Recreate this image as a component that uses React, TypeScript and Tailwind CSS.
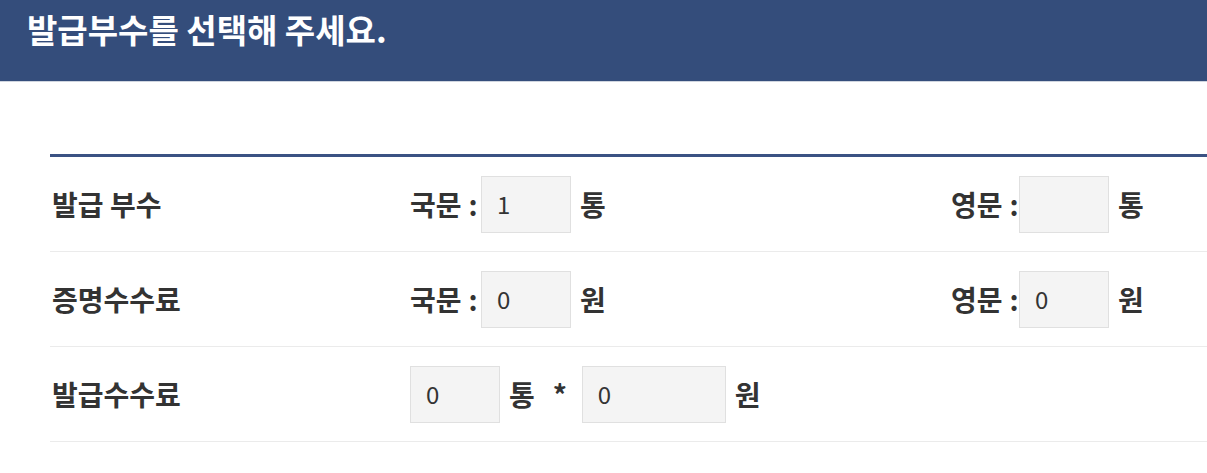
import React from "react";

const font = { fontFamily: '"Noto Sans CJK KR", "Noto Sans", sans-serif' };

function Box({ value, w = "w-[90px]" }: { value: string; w?: string }) {
  return (
    <div
      className={`${w} h-[57px] bg-[#f4f4f4] border border-[#e0e0e0] flex items-center pl-[15px] text-[24px] font-normal text-[#333]`}
    >
      {value}
    </div>
  );
}

function Lbl({ text, w }: { text: string; w: string }) {
  return (
    <span className={`${w} flex items-center`}>
      <span>{text}</span>
      <span className="ml-[7px]">:</span>
    </span>
  );
}

export default function App() {
  return (
    <div className="w-[1207px] h-[473px] bg-white overflow-hidden" style={font}>
      <div className="h-[82px] bg-[#344d7b] border-b border-[#cfd5df] px-[27px] pt-[4px]">
        <h1 className="text-[33px] font-bold text-white leading-[50px]">발급부수를 선택해 주세요.</h1>
      </div>
      <div className="pl-[50px] pt-[72px]">
        <div className="border-t-[3px] border-[#3b5283] w-[1200px]">
          {/* row 1 */}
          <div className="h-[95px] border-b border-[#ebebeb] grid grid-cols-[360px_541px_1fr] items-center text-[28px] font-semibold text-[#333]">
            <div className="pl-[2px]">발급 부수</div>
            <div className="flex items-center">
              <Lbl text="국문" w="w-[71px]" />
              <Box value="1" />
              <span className="ml-[9px]">통</span>
            </div>
            <div className="flex items-center">
              <Lbl text="영문" w="w-[68px]" />
              <Box value="" />
              <span className="ml-[9px]">통</span>
            </div>
          </div>
          {/* row 2 */}
          <div className="h-[95px] border-b border-[#ebebeb] grid grid-cols-[360px_541px_1fr] items-center text-[28px] font-semibold text-[#333]">
            <div className="pl-[2px]">증명수수료</div>
            <div className="flex items-center">
              <Lbl text="국문" w="w-[71px]" />
              <Box value="0" />
              <span className="ml-[9px]">원</span>
            </div>
            <div className="flex items-center">
              <Lbl text="영문" w="w-[68px]" />
              <Box value="0" />
              <span className="ml-[9px]">원</span>
            </div>
          </div>
          {/* row 3 */}
          <div className="h-[95px] border-b border-[#ebebeb] grid grid-cols-[360px_1fr] items-center text-[28px] font-semibold text-[#333]">
            <div className="pl-[2px]">발급수수료</div>
            <div className="flex items-center">
              <Box value="0" />
              <span className="ml-[9px]">통</span>
              <span className="ml-[18px] w-[29px]">*</span>
              <Box value="0" w="w-[144px]" />
              <span className="ml-[9px]">원</span>
            </div>
          </div>
        </div>
      </div>
    </div>
  );
}
